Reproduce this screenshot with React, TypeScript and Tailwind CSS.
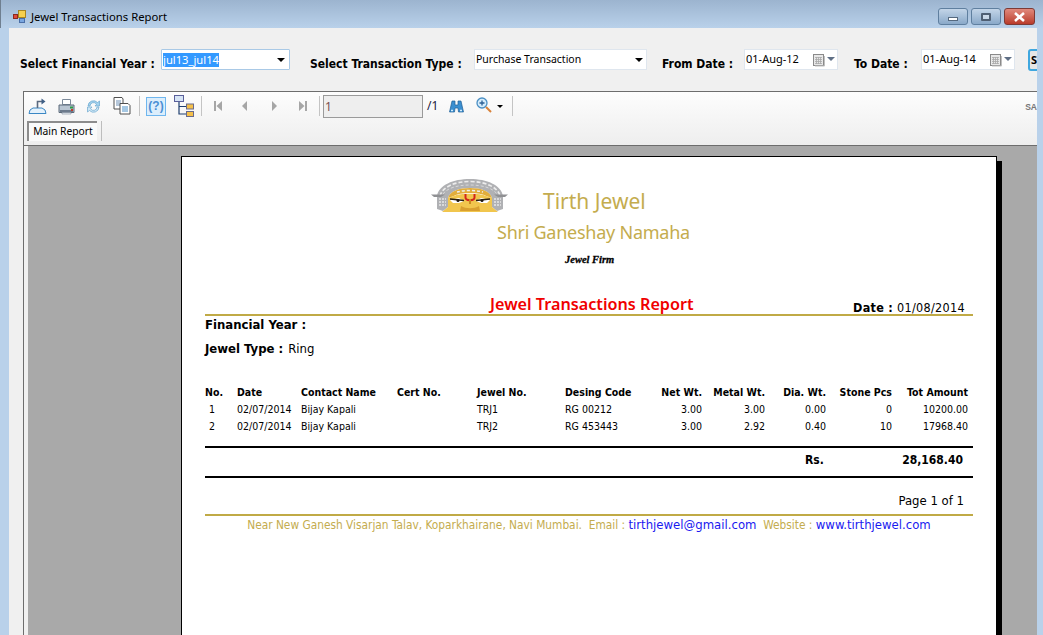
import React from 'react';

const rows = [
  { no: '1', date: '02/07/2014', contact: 'Bijay Kapali', jewel: 'TRJ1', code: 'RG 00212', net: '3.00', metal: '3.00', dia: '0.00', stone: '0', amount: '10200.00' },
  { no: '2', date: '02/07/2014', contact: 'Bijay Kapali', jewel: 'TRJ2', code: 'RG 453443', net: '3.00', metal: '2.92', dia: '0.40', stone: '10', amount: '17968.40' },
];

function AppIcon() {
  return (
    <svg width="13" height="13" viewBox="0 0 13 13" className="mr-[5px] shrink-0">
      <rect x="0.5" y="4.5" width="4" height="4" fill="#e04a3a" stroke="#8a2a20" />
      <rect x="5.5" y="0.5" width="7" height="7" fill="#f6d04e" stroke="#a88520" />
      <rect x="6.5" y="8.5" width="5" height="4" fill="#7aa7e0" stroke="#4a6fa8" />
    </svg>
  );
}

function WindowButtons() {
  return (
    <div className="flex gap-[3px] mt-[8px]">
      <div className="w-[30px] h-[17px] rounded-[3px] border border-[#5f7f9f] bg-gradient-to-b from-[#c3d5e8] to-[#8aa9c9] flex items-center justify-center">
        <div className="w-[10px] h-[4px] mt-[4px] bg-white border border-[#55697f]" />
      </div>
      <div className="w-[30px] h-[17px] rounded-[3px] border border-[#5f7f9f] bg-gradient-to-b from-[#c3d5e8] to-[#8aa9c9] flex items-center justify-center">
        <div className="w-[10px] h-[8px] border-2 border-[#4f5f73] bg-white/40 rounded-[1px]" />
      </div>
      <div className="w-[31px] h-[17px] rounded-[3px] border border-[#7d3a35] bg-gradient-to-b from-[#e0897c] to-[#b93a2a] flex items-center justify-center">
        <svg width="13" height="10" viewBox="0 0 13 10">
          <path d="M2 1 L11 9 M11 1 L2 9" stroke="#fff" strokeWidth="2.6" />
        </svg>
      </div>
    </div>
  );
}

function Caret({ className }: { className?: string }) {
  return <div className={`w-0 h-0 border-l-[4px] border-r-[4px] border-t-[4px] border-l-transparent border-r-transparent border-t-black ${className ?? ''}`} />;
}

function DateBox({ value }: { value: string }) {
  return (
    <div className="w-[94px] h-[21px] shrink-0 bg-white border border-[#dfe6ee] flex items-center pl-[1px] text-[11px] text-black">
      <span className="w-[65px] shrink-0 mt-[-1px]">{value}</span>
      <svg width="14" height="14" viewBox="0 0 14 14" className="ml-[1px] shrink-0">
        <rect x="1.5" y="1.5" width="10" height="11" fill="#e8e8e8" stroke="#8a8a8a" />
        <path d="M3 4.5h7M3 6.5h7M3 8.5h7M3 10.5h7M4.5 4v7M6.5 4v7M8.5 4v7" stroke="#a8a8a8" strokeWidth="0.8" />
        <path d="M12.5 3v10H3" stroke="#c0c0c0" fill="none" />
      </svg>
      <div className="ml-[1px] mb-[2px] w-0 h-0 border-l-[4px] border-r-[4px] border-t-[4px] border-l-transparent border-r-transparent border-t-[#5f6f85]" />
    </div>
  );
}

function ExportIcon() {
  return (
    <svg width="20" height="18" viewBox="0 0 20 18">
      <path d="M1 16.5h17l-1-3.5-3-2H5l-3 2z" fill="#e4f1fb" stroke="#3a87c4" />
      <path d="M9.5 11V4.5H14" fill="none" stroke="#5a6a80" strokeWidth="1.6" />
      <path d="M13.5 1.5l4 3-4 3z" fill="#3f5f85" />
    </svg>
  );
}

function PrintIcon() {
  return (
    <svg width="17" height="17" viewBox="0 0 17 17">
      <path d="M4.5 1.5h8v5h-8z" fill="#fff" stroke="#7c8a9a" />
      <path d="M1 7h15v7.5H1z" fill="#b9c5d2" stroke="#5d6b7a" />
      <path d="M2 12h13v2H2z" fill="#6d7b8c" />
      <rect x="12" y="8.5" width="3" height="2" fill="#2c9a48" />
      <rect x="13" y="11" width="2" height="2" fill="#c0392b" />
      <path d="M4 14.5h9v1.5H4z" fill="#eef2f6" stroke="#7c8a9a" strokeWidth="0.6" />
    </svg>
  );
}

function RefreshIcon() {
  return (
    <svg width="15" height="15" viewBox="0 0 15 15">
      <path d="M2 7a5.5 5.5 0 0 1 9.5-3.5L13.5 2v5H9l1.5-1.7A3.5 3.5 0 0 0 4 7z" fill="#a5d3ee" stroke="#6aa6cf" strokeWidth="0.7" />
      <path d="M13 8a5.5 5.5 0 0 1-9.5 3.5L1.5 13V8H6l-1.5 1.7A3.5 3.5 0 0 0 11 8z" fill="#cfe8f6" stroke="#6aa6cf" strokeWidth="0.7" />
    </svg>
  );
}

function CopyIcon() {
  return (
    <svg width="18" height="18" viewBox="0 0 18 18">
      <path d="M1 .5h8l1 1.5V12H1z" fill="#fff" stroke="#4f4f4f" />
      <path d="M3 4h5M3 6h5M3 8h5" stroke="#6d8fb5" />
      <path d="M7 6.5h8l2 2V17H7z" fill="#fff" stroke="#4f4f4f" />
      <path d="M9 10h6M9 12h6M9 14h6" stroke="#4a90c8" />
    </svg>
  );
}

function HelpBox() {
  return (
    <div className="w-[20px] h-[19px] border border-[#6fb6ee] bg-[#dceefc] flex items-center justify-center text-[12px] font-bold text-[#4a8fd4] font-['Liberation_Sans',sans-serif]">
      (?)
    </div>
  );
}

function TreeIcon() {
  return (
    <svg width="20" height="22" viewBox="0 0 20 22">
      <rect x="0.5" y="0.5" width="9" height="6" fill="#d6e4f5" stroke="#5a5f9a" />
      <path d="M5 7v12h7M5 11.5h7" fill="none" stroke="#1f3f70" strokeWidth="1.2" />
      <rect x="12.5" y="9" width="7" height="5" fill="#f5c04a" stroke="#6a6a8a" />
      <rect x="12.5" y="16.5" width="7" height="5" fill="#f5c04a" stroke="#6a6a8a" />
    </svg>
  );
}

function NavIcon({ kind }: { kind: 'first' | 'prev' | 'next' | 'last' }) {
  const paths = {
    first: 'M1 1h2v10H1z M9 1v10L3.5 6z',
    prev: 'M6 1v10L1 6z',
    next: 'M1 1v10l5-5z',
    last: 'M1 1v10l5.5-5z M7 1h2v10H7z',
  };
  return (
    <svg width="10" height="12" viewBox="0 0 10 12">
      <path d={paths[kind]} fill="#a6a6a6" />
    </svg>
  );
}

function BinocularsIcon() {
  return (
    <svg width="15" height="13" viewBox="0 0 15 13">
      <path d="M3 1h3v4h3V1h3l2.5 11h-5L9 8H6l-.5 4h-5z" fill="#3b8fd0" stroke="#1f5f95" strokeWidth="0.7" />
      <path d="M2 10.5h2M11 10.5h2" stroke="#d4ecfb" strokeWidth="1.5" />
    </svg>
  );
}

function ZoomIcon() {
  return (
    <svg width="16" height="16" viewBox="0 0 16 16">
      <circle cx="6" cy="6" r="5" fill="#d5ecfb" stroke="#4a8fc4" strokeWidth="1.3" />
      <path d="M3.5 6h5M6 3.5v5" stroke="#2a5f95" strokeWidth="1.3" />
      <path d="M10 10l5 5" stroke="#d9823a" strokeWidth="2" />
    </svg>
  );
}

function ToolSep({ className }: { className?: string }) {
  return <div className={`w-[1px] h-[20px] bg-[#c4c4c4] ${className ?? ''}`} />;
}

function Logo() {
  return (
    <svg width="77" height="33" viewBox="0 0 77 33" className="shrink-0">
      {/* silver arch */}
      <path d="M6 30V17C8 6 22 0 39 0s31 6 33 17v13l-6 2-5-4V19C59 12 50 9 39 9s-20 3-22 10v9l-5 4z" fill="#b0b1b4" />
      <path d="M9 17C11 8 24 2.5 39 2.5S67 8 69 17" fill="none" stroke="#ececec" strokeWidth="1.6" strokeDasharray="4 2" />
      <path d="M12 15C16 9 27 6 39 6s23 3 27 9" fill="none" stroke="#d8d8d8" strokeDasharray="3 2" />
      <path d="M8 20h7M8 23h7M8 26h7M63 20h7M63 23h7M63 26h7" stroke="#e6e6e6" strokeWidth="1.3" strokeDasharray="2 1" />
      {/* wing ledges */}
      <path d="M0 15.5h14l-4 2.5H3z" fill="#8f9093" />
      <path d="M77 15.5H63l4 2.5h7z" fill="#8f9093" />
      {/* gold band and face */}
      <path d="M17 19C19 12 28 9 39 9s20 3 22 10l-6-2C50 13 28 13 23 17z" fill="#e2ae3c" />
      <path d="M23 17C28 14 50 14 55 17l6 2v9l6 5H11l6-5v-9z" fill="#f1c64e" />
      <path d="M26 13c8-2 18-2 26 0" fill="none" stroke="#efefef" strokeWidth="1.5" strokeDasharray="3 2" />
      {/* eyes */}
      <path d="M19 21l9-2 5 3-5 2h-6z M59 21l-9-2-5 3 5 2h6z" fill="#fff" />
      <path d="M19 20l14 1.5M59 20l-14 1.5" stroke="#2a2014" strokeWidth="1.3" />
      <circle cx="27" cy="21.5" r="1.5" fill="#1f1810" />
      <circle cx="51" cy="21.5" r="1.5" fill="#1f1810" />
      {/* tilak */}
      <path d="M34.5 15v3.500c0 3.500 9 3.500 9 0V15" fill="none" stroke="#d3261c" strokeWidth="2" />
      <path d="M39 20v5" stroke="#c98a20" strokeWidth="2" />
      <path d="M30 27c5 3 13 3 18 0l1 5H29z" fill="#d9a030" />
    </svg>
  );
}

export default function App() {
  return (
    <div className="w-[1043px] h-[635px] overflow-hidden flex flex-col bg-[#b9d1ea] font-['Noto_Sans',sans-serif]">
      {/* Title bar */}
      <div className="h-[28px] shrink-0 flex bg-gradient-to-b from-[#9cb4cf] to-[#b9d1ea] pl-[12px] pr-[8px] border-l border-l-[#6f7f90]">
        <div className="flex items-start pt-[10px]">
          <AppIcon />
          <span className="text-[11.3px] leading-[13px] text-black">Jewel Transactions Report</span>
        </div>
        <div className="ml-auto">
          <WindowButtons />
        </div>
      </div>

      <div className="flex-1 min-h-0 flex pl-[9px] pr-[6px]">
        <div className="flex-1 min-w-0 bg-[#f0f0f0] overflow-hidden flex flex-col">
          {/* Filter row */}
          <div className="h-[63px] shrink-0 flex items-start pt-[21px] whitespace-nowrap text-[12px] text-black">
            <span className="ml-[11px] w-[141px] shrink-0 mt-[6px] font-bold font-['DejaVu_Sans_Condensed','DejaVu_Sans',sans-serif]">Select Financial Year :</span>
            <div className="w-[129px] h-[21px] shrink-0 bg-white border border-[#a9c9e6] flex items-center pl-[1px] pr-[4px] rounded-[1px] text-[11.2px]">
              <span className="bg-[#3399ff] text-white leading-[14px]">jul13_jul14</span>
              <Caret className="ml-auto" />
            </div>
            <span className="ml-[20px] w-[164px] shrink-0 mt-[6px] font-bold font-['DejaVu_Sans_Condensed','DejaVu_Sans',sans-serif]">Select Transaction Type :</span>
            <div className="w-[173px] h-[21px] shrink-0 bg-white border border-[#dfe6ee] flex items-center pl-[1px] pr-[3px] text-[10.5px]">
              <span>Purchase Transaction</span>
              <Caret className="ml-auto" />
            </div>
            <span className="ml-[15px] w-[82px] shrink-0 mt-[6px] font-bold font-['DejaVu_Sans_Condensed','DejaVu_Sans',sans-serif]">From Date :</span>
            <DateBox value="01-Aug-12" />
            <span className="ml-[16px] w-[67px] shrink-0 mt-[6px] font-bold font-['DejaVu_Sans_Condensed','DejaVu_Sans',sans-serif]">To Date :</span>
            <DateBox value="01-Aug-14" />
            <div className="ml-[13px] w-[30px] h-[22px] shrink-0 rounded-[3px] border-2 border-[#3fa7df] bg-[#e6e6e6] pl-[1px] text-[11px] font-bold leading-[18px]">S</div>
          </div>

          {/* Report viewer */}
          <div className="flex-1 min-h-0 ml-[14px] flex flex-col border-l border-t border-[#6d6d6d]">
            <div className="h-[54px] shrink-0 border-b border-[#6d6d6d] bg-gradient-to-b from-[#fdfdfd] to-[#eeeeee]">
              <div className="h-[28px] flex items-center">
                <div className="ml-[4px] w-[20px]"><ExportIcon /></div>
                <div className="ml-[10px] w-[17px]"><PrintIcon /></div>
                <div className="ml-[11px] w-[15px]"><RefreshIcon /></div>
                <div className="ml-[12px] w-[18px]"><CopyIcon /></div>
                <ToolSep className="ml-[8px]" />
                <div className="ml-[6px]"><HelpBox /></div>
                <div className="ml-[8px]"><TreeIcon /></div>
                <ToolSep className="ml-[7px]" />
                <div className="ml-[11px]"><NavIcon kind="first" /></div>
                <div className="ml-[18px]"><NavIcon kind="prev" /></div>
                <div className="ml-[20px]"><NavIcon kind="next" /></div>
                <div className="ml-[17px]"><NavIcon kind="last" /></div>
                <ToolSep className="ml-[11px]" />
                <div className="ml-[3px] w-[100px] h-[23px] shrink-0 border border-[#9a9a9a] bg-[#eeeeee] text-[12px] leading-[21px] pl-[1px] text-[#7a5050]">1</div>
                <span className="ml-[4px] w-[18px] shrink-0 text-[12px] text-[#1a1a40]">/1</span>
                <div className="ml-[4px]"><BinocularsIcon /></div>
                <div className="ml-[12px] mb-[2px]"><ZoomIcon /></div>
                <div className="ml-[5px] w-0 h-0 border-l-[3px] border-r-[3px] border-t-[3px] border-l-transparent border-r-transparent border-t-black" />
                <ToolSep className="ml-[9px]" />
                <span className="ml-auto mt-[3px] text-[8.5px] font-bold text-[#777] font-['Liberation_Sans',sans-serif]">SA</span>
              </div>
              <div className="h-[21px] ml-[3px] flex items-start">
                <div className="w-[70px] h-[20px] mt-[1px] border-l-2 border-t-2 border-[#8c8c8c] bg-[#fafafa] text-[10.3px] leading-[17px] text-center text-black">Main Report</div>
                <div className="ml-[4px] mt-[1px] w-[1px] h-[20px] bg-[#bdbdbd]" />
              </div>
            </div>

            {/* Report canvas */}
            <div className="flex-1 min-h-0 ml-[4px] bg-[#a9a9a9] pt-[10px] pl-[153px] overflow-hidden flex items-start">
              <div className="w-[816px] h-[600px] shrink-0 bg-white border border-black px-[23px] pt-[22px] shadow-[5px_5px_0_#000] font-['DejaVu_Sans_Condensed','DejaVu_Sans',sans-serif]">
                <div className="h-[33px] flex items-end pl-[226px]">
                  <div className="self-start"><Logo /></div>
                  <span className="ml-[35px] text-[21px] leading-[22px] text-[#c4ac4e] font-['Noto_Sans',sans-serif] whitespace-nowrap">Tirth Jewel</span>
                </div>
                <div className="mt-[8px] h-[24px] pl-[292px] text-[18px] leading-[24px] text-[#c4ac4e] font-['Noto_Sans',sans-serif] whitespace-nowrap tracking-[-0.25px]">Shri Ganeshay Namaha</div>
                <div className="mt-[8px] h-[16px] pl-[360px] text-[10.5px] leading-[16px] italic font-bold text-black font-['Liberation_Serif',serif] [-webkit-text-stroke:0.3px_black]">Jewel Firm</div>

                <div className="mt-[26px] h-[20px] flex items-end whitespace-nowrap">
                  <span className="ml-[285px] w-[363px] shrink-0 text-[16.2px] leading-[20px] font-semibold text-[#f00000] font-['Noto_Sans',sans-serif]">Jewel Transactions Report</span>
                  <span className="text-[12.5px] leading-[14px] -mb-[1px] text-black tracking-[0.3px]"><b>Date :</b> 01/08/2014</span>
                </div>
                <div className="h-[2px] bg-[#c0aa46]" />
                <div className="h-[17px] text-[13px] leading-[17px] font-bold text-black">Financial Year :</div>
                <div className="mt-[7px] h-[17px] text-[13px] leading-[17px] text-black"><b>Jewel Type :</b><span className="ml-[5px]">Ring</span></div>

                {/* Transactions table */}
                <div className="mt-[27px] text-[10.5px] text-black grid grid-cols-[32px_64px_96px_80px_88px_70px_67px_63px_61px_66px_76px] whitespace-nowrap">
                  <div className="h-[17px] leading-[17px] font-bold">No.</div>
                  <div className="h-[17px] leading-[17px] font-bold">Date</div>
                  <div className="h-[17px] leading-[17px] font-bold">Contact Name</div>
                  <div className="h-[17px] leading-[17px] font-bold">Cert No.</div>
                  <div className="h-[17px] leading-[17px] font-bold">Jewel No.</div>
                  <div className="h-[17px] leading-[17px] font-bold">Desing Code</div>
                  <div className="h-[17px] leading-[17px] font-bold text-right">Net Wt.</div>
                  <div className="h-[17px] leading-[17px] font-bold text-right">Metal Wt.</div>
                  <div className="h-[17px] leading-[17px] font-bold text-right">Dia. Wt.</div>
                  <div className="h-[17px] leading-[17px] font-bold text-right">Stone Pcs</div>
                  <div className="h-[17px] leading-[17px] font-bold text-right">Tot Amount</div>
                  {rows.map((r) => (
                    <React.Fragment key={r.no}>
                      <div className="h-[17px] leading-[16px] pl-[4px]">{r.no}</div>
                      <div className="h-[17px] leading-[16px]">{r.date}</div>
                      <div className="h-[17px] leading-[16px]">{r.contact}</div>
                      <div className="h-[17px]" />
                      <div className="h-[17px] leading-[16px]">{r.jewel}</div>
                      <div className="h-[17px] leading-[16px]">{r.code}</div>
                      <div className="h-[17px] leading-[16px] text-right">{r.net}</div>
                      <div className="h-[17px] leading-[16px] text-right">{r.metal}</div>
                      <div className="h-[17px] leading-[16px] text-right">{r.dia}</div>
                      <div className="h-[17px] leading-[16px] text-right">{r.stone}</div>
                      <div className="h-[17px] leading-[16px] text-right">{r.amount}</div>
                    </React.Fragment>
                  ))}
                </div>

                <div className="mt-[11px] h-[32px] border-y-2 border-black flex items-start text-[12px] font-bold text-black">
                  <span className="ml-[600px] w-[60px] leading-[24px]">Rs.</span>
                  <span className="ml-auto mr-[10px] leading-[24px]">28,168.40</span>
                </div>
                <div className="mt-[15px] h-[16px] text-right pr-[9px] text-[13px] leading-[16px] text-black">Page 1 of 1</div>
                <div className="mt-[5px] h-[2px] bg-[#c0aa46]" />
                <div className="mt-[1px] h-[16px] text-center text-[11.8px] leading-[16px] whitespace-nowrap text-[#c4ac4e]">
                  Near New Ganesh Visarjan Talav, Koparkhairane, Navi Mumbai.&nbsp; Email : <span className="text-[13px] text-[#1a1af0]">tirthjewel@gmail.com</span>&nbsp; Website : <span className="text-[13px] text-[#1a1af0]">www.tirthjewel.com</span>
                </div>
              </div>
            </div>
          </div>
        </div>
      </div>
    </div>
  );
}
